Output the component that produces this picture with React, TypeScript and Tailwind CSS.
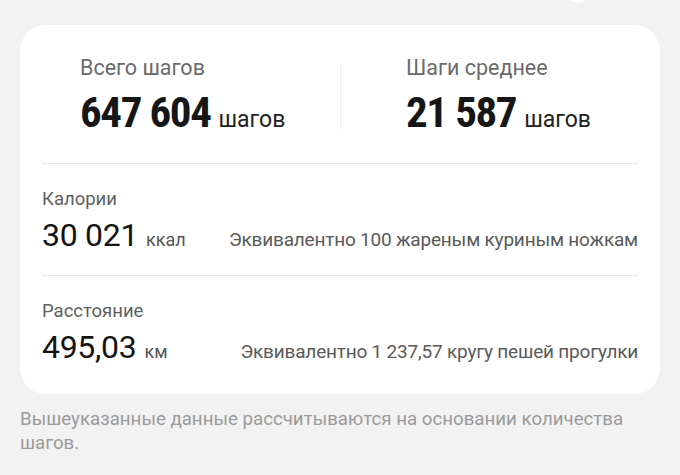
import React from "react";

const condensed = {
  fontFamily: '"Roboto Condensed", "Liberation Sans Narrow", "Arial Narrow", Roboto, sans-serif',
};

function TopStat({ label, value }: { label: string; value: string }) {
  return (
    <div className="flex flex-col">
      <span className="text-[21.5px] leading-[24px] text-[#6b6b6b]">{label}</span>
      <div className="mt-[9px] flex items-baseline">
        <span
          className="text-[43px] leading-[46px] font-bold tracking-[-1.4px] text-[#161616]"
          style={condensed}
        >
          {value}
        </span>
        <span className="ml-[8px] text-[23px] text-[#222]">шагов</span>
      </div>
    </div>
  );
}

function Row({
  label,
  value,
  unit,
  note,
}: {
  label: string;
  value: string;
  unit: string;
  note: string;
}) {
  return (
    <div className="flex flex-col pt-[24px] pb-[21px]">
      <span className="text-[18.5px] leading-[22px] text-[#5f5f5f]">{label}</span>
      <div className="mt-[6px] flex items-baseline justify-between">
        <div className="flex items-baseline">
          <span className="text-[32px] leading-[38px] tracking-[-0.3px] text-[#141414]">{value}</span>
          <span className="ml-[8px] text-[18px] text-[#555]">{unit}</span>
        </div>
        <span className="text-[19px] tracking-[-0.2px] text-[#5a5a5a]">{note}</span>
      </div>
    </div>
  );
}

export default function App() {
  return (
    <div
      className="relative h-[475px] w-[680px] overflow-hidden bg-[#f2f2f2]"
      style={{ fontFamily: 'Roboto, "Noto Sans", sans-serif' }}
    >
      <div className="absolute left-[565px] top-[-22px] h-[25px] w-[25px] rounded-full bg-white" />
      <div className="px-[20px] pt-[25px]">
        <div className="rounded-[26px] bg-white px-[22px] pb-[6px]">
          <div className="flex items-center pt-[31px] pb-[25px]">
            <div className="flex w-[298px] justify-start pl-[38px]">
              <TopStat label="Всего шагов" value="647 604" />
            </div>
            <div className="h-[66px] w-px bg-[#f0f0f0]" />
            <div className="pl-[65px]">
              <TopStat label="Шаги среднее" value="21 587" />
            </div>
          </div>
          <div className="h-px bg-[#e6e6e6]" />
          <Row
            label="Калории"
            value="30 021"
            unit="ккал"
            note="Эквивалентно 100 жареным куриным ножкам"
          />
          <div className="h-px bg-[#e6e6e6]" />
          <Row
            label="Расстояние"
            value="495,03"
            unit="км"
            note="Эквивалентно 1 237,57 кругу пешей прогулки"
          />
        </div>
        <p className="mt-[13px] text-[18.7px] leading-[24px] text-[#9a9a9a]">
          Вышеуказанные данные рассчитываются на основании количества шагов.
        </p>
      </div>
    </div>
  );
}
